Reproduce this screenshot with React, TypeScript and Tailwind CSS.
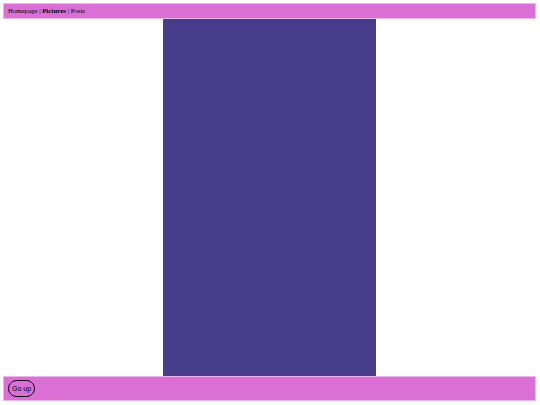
export default function App() {
  return (
    <div className="flex h-[405px] w-[540px] flex-col bg-white pl-[3px] pr-[4px] pt-[3px] pb-[4px] font-['Liberation_Serif',serif] text-black">
      {/* Top nav */}
      <div className="flex h-[16px] items-center whitespace-pre border border-[#eeb4ec] bg-[#da70d6] px-[4px] text-[6.8px] leading-none">
        <span>Homepage | </span>
        <span className="font-bold">Pictures</span>
        <span> | Posts</span>
      </div>

      {/* Picture */}
      <div className="flex flex-1 justify-center">
        <div className="w-[213px] bg-[#483d8b]" />
      </div>

      {/* Footer */}
      <div className="flex h-[25px] items-center border border-[#eeb4ec] bg-[#da70d6] px-[4px]">
        <button className="flex h-[17px] items-center rounded-full border border-black px-[3px] font-['Liberation_Sans',sans-serif] text-[7px] leading-none">
          Go up
        </button>
      </div>
    </div>
  );
}
